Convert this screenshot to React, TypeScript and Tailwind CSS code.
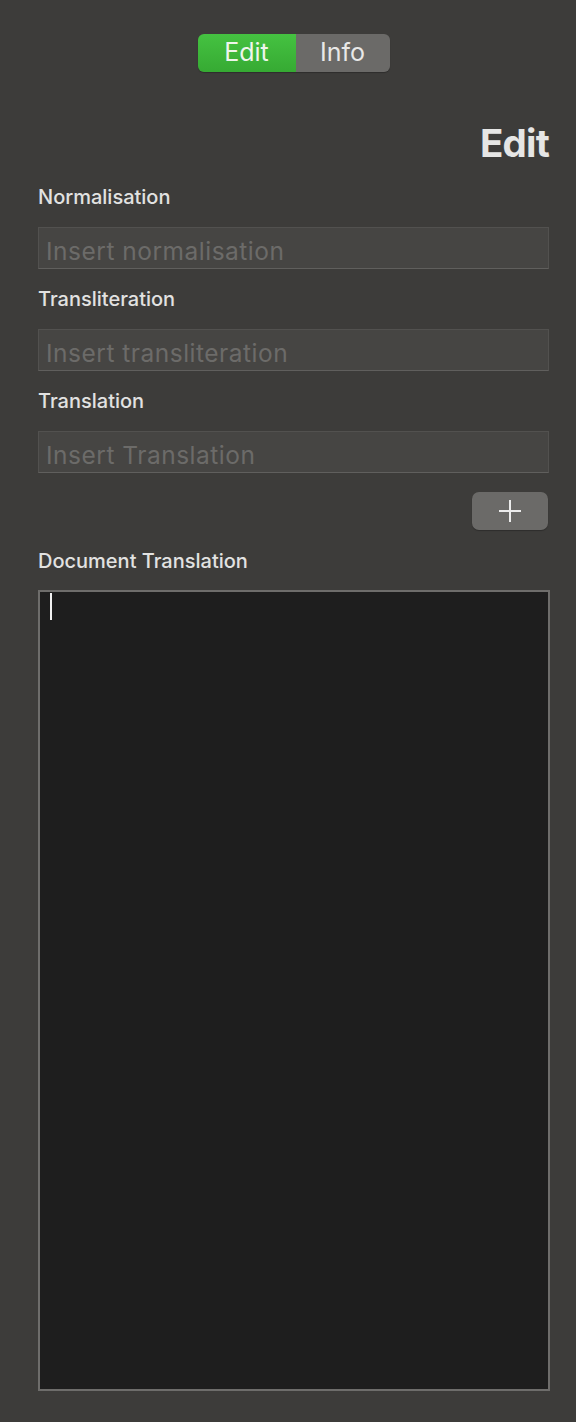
import React from "react";

const font = { fontFamily: "Inter, 'Noto Sans', sans-serif" };

function Field({ label, placeholder, first }: { label: string; placeholder: string; first?: boolean }) {
  return (
    <>
      <div className={`${first ? "mt-[20px]" : "mt-[18px]"} h-[24px] text-[20px] leading-[24px] font-medium text-[#e2e2e1]`}>
        {label}
      </div>
      <div className="mt-[18px] h-[42px] w-[511px] border border-[#52514f] border-b-[#605f5d] bg-[#464543] pl-[7px] pt-[9px] text-[24.5px] leading-[29px] tracking-[0.5px] text-[#6c6b69] whitespace-nowrap">
        {placeholder}
      </div>
    </>
  );
}

export default function App() {
  return (
    <div className="w-[576px] h-[1422px] bg-[#3d3c3a] pl-[38px] pr-[27px] pt-[34px] flex flex-col" style={font}>
      <div className="flex justify-center">
        <div className="flex h-[38px] w-[192px] rounded-[6px] overflow-hidden shadow-[0_1px_1px_rgba(0,0,0,0.25)]">
          <div className="w-[98px] h-full bg-gradient-to-b from-[#45c241] to-[#36aa33] flex items-center justify-center text-[25px] text-[#eef5ec] pb-[1px]">
            Edit
          </div>
          <div className="flex-1 h-full bg-[#6b6a68] flex items-center justify-center text-[25px] text-[#e8e8e7] pb-[1px]">
            Info
          </div>
        </div>
      </div>
      <div className="mt-[49px] h-[44px] text-right text-[38.5px] leading-[44px] font-bold text-[#e6e6e5] tracking-[-0.8px]">
        Edit
      </div>
      <Field label="Normalisation" placeholder="Insert normalisation" first />
      <Field label="Transliteration" placeholder="Insert transliteration" />
      <Field label="Translation" placeholder="Insert Translation" />
      <div className="mt-[19px] flex justify-end pr-[1px]">
        <button className="h-[38px] w-[76px] rounded-[7px] bg-[#6b6a68] flex items-center justify-center shadow-[0_1px_1px_rgba(0,0,0,0.25)]">
          <svg width="24" height="24" viewBox="0 0 24 24">
            <path d="M12 1v22M1 12h22" stroke="#ececec" strokeWidth="2" />
          </svg>
        </button>
      </div>
      <div className="mt-[19px] h-[24px] text-[20px] leading-[24px] font-medium text-[#e2e2e1]">
        Document Translation
      </div>
      <div className="mt-[17px] h-[801px] w-[512px] border-2 border-[#6e6d6b] bg-[#1e1e1e] pl-[10px] pt-[1px]">
        <div className="w-[2px] h-[27px] bg-[#f2f2f2]" />
      </div>
    </div>
  );
}
